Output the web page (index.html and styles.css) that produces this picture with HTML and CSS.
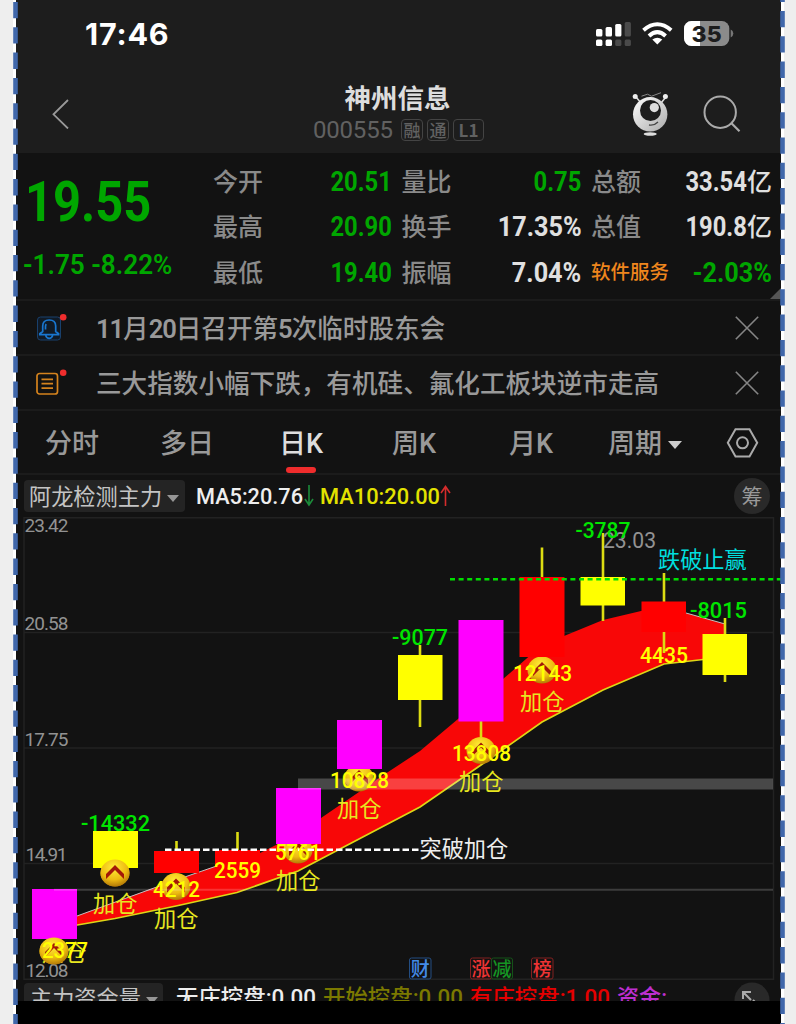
FILE: index.html
```html
<!DOCTYPE html>
<html lang="zh-CN">
<head>
<meta charset="utf-8">
<title>神州信息 000555</title>
<link rel="stylesheet" href="styles.css">
</head>
<body>
<div class="stage">
<svg class="edge" width="5" height="1024"><path class="dash" d="M2.5 2V1024"/></svg>
<main class="phone">
  <header class="top">
    <div class="status">
      <span class="clock">17:46</span>
      <svg class="status-icons" width="138" height="28" viewBox="0 0 138 28">
        <g fill="#fff">
          <rect x="0" y="8" width="6.4" height="7.4" rx="1.5"/><rect x="9.6" y="6" width="6.4" height="9.4" rx="1.5"/><rect x="19.2" y="3" width="6.2" height="12.4" rx="1.5"/>
          <rect x="0" y="18.4" width="6.4" height="6.6" rx="1.5"/><rect x="9.6" y="18.4" width="6.4" height="6.6" rx="1.5"/>
        </g>
        <g fill="#4a4a4a"><rect x="28.7" y="1" width="6.2" height="14.4" rx="1.5"/><rect x="19.2" y="18.4" width="6.2" height="6.6" rx="1.5"/><rect x="28.7" y="18.4" width="6.2" height="6.6" rx="1.5"/></g>
        <g fill="none" stroke="#fff" stroke-width="4"><path d="M47.500 9.200Q61.300-2.600 75.200 9.200"/><path d="M53 15Q61.300 7.400 69.600 15"/></g>
        <path fill="#fff" d="M56.300 18.600q5-3.800 10 0l-5 5z"/>
        <rect x="88" y="0" width="45.3" height="25" rx="7.5" fill="#8b8b8b"/>
        <path fill="#fff" d="M95.5 0H104V25H95.5A7.500 7.500 0 0 1 88 17.500V7.500A7.500 7.500 0 0 1 95.500 0Z"/>
        <path fill="#777" d="M134.700 8.500q2.600 1 2.600 4t-2.600 4z"/>
        <text class="battery" x="110.600" y="20.600" text-anchor="middle" textLength="30" lengthAdjust="spacingAndGlyphs">35</text>
      </svg>
    </div>
    <div class="titlebar">
      <svg class="back" width="18" height="30" viewBox="0 0 18 30"><path d="M16 1 1.5 15.3 16 29.5"/></svg>
      <div class="title">
        <h1>神州信息</h1>
        <div class="code"><span class="digits">000555</span><i>融</i><i>通</i><i class="wide">L1</i></div>
      </div>
      <div class="tools">
        <svg width="38" height="44" viewBox="0 0 38 44">
          <defs><linearGradient id="robot" x2="1" y2="1"><stop stop-color="#fff"/><stop offset="1" stop-color="#aaa"/></linearGradient></defs>
          <path d="M4 5l5 6M34 5l-5 6" stroke="#ddd" stroke-width="1.6"/><circle cx="3.2" cy="4.6" r="2.5" fill="#eee"/><circle cx="33.4" cy="4.6" r="2.5" fill="#eee"/>
          <path d="M9.5 4.2l6-2 4 2 9.5-3.5" fill="none" stroke="#888" stroke-width="1"/>
          <circle cx="18.2" cy="22.3" r="17.2" fill="url(#robot)"/><circle cx="18.5" cy="18.5" r="10.5" fill="#1d1d1d"/><circle cx="22.3" cy="15.6" r="4.6" fill="#ddd"/>
          <path d="M17 33q5 1 9-3" fill="none" stroke="#444" stroke-width="1.3"/><ellipse cx="18.2" cy="42" rx="6.5" ry="1.7" fill="#ddd"/>
        </svg>
        <svg width="38" height="38" viewBox="0 0 38 38"><circle cx="17.2" cy="17.2" r="15.7" fill="none" stroke="#aaa" stroke-width="2"/><path d="M28.2 28 36.5 36.3" stroke="#aaa" stroke-width="2.2"/></svg>
      </div>
    </div>
  </header>

  <section class="quote">
    <div class="price"><b>19.55</b><span>-1.75 -8.22%</span></div>
    <dl class="stats">
      <div><dt>今开</dt><dd class="down"><span>20.51</span></dd></div>
      <div><dt>量比</dt><dd class="down"><span>0.75</span></dd></div>
      <div><dt>总额</dt><dd><span>33.54</span>亿</dd></div>
      <div><dt>最高</dt><dd class="down"><span>20.90</span></dd></div>
      <div><dt>换手</dt><dd class="percent"><span>17.35%</span></dd></div>
      <div><dt>总值</dt><dd><span>190.8</span>亿</dd></div>
      <div><dt>最低</dt><dd class="down"><span>19.40</span></dd></div>
      <div><dt>振幅</dt><dd class="percent"><span>7.04%</span></dd></div>
      <div><dt class="sector">软件服务</dt><dd class="down percent"><span>-2.03%</span></dd></div>
    </dl>
    <i class="corner"></i>
  </section>

  <section class="news">
    <svg width="32" height="32" viewBox="0 0 32 32"><rect x="1.5" y="5" width="23" height="23" rx="3" fill="#101a26" stroke="#19406c"/><path d="M3.800 22.700v-1l2.900-2.200V14q0-6 6.500-6t6.500 6v5.500l2.900 2.200v1zM9.700 23.500q1 2.800 3.500 2.800t3.500-2.800M9.500 17.500v-3q0-1.500.8-2.300" fill="none" stroke="#1976cf" stroke-width="1.700"/><circle cx="27.200" cy="5.300" r="3.300" fill="#f02d2d"/></svg>
    <p><span class="digits">11</span>月<span class="digits">20</span>日召开第<span class="digits">5</span>次临时股东会</p>
    <svg class="close" width="24" height="24" viewBox="0 0 24 24"><path d="M.8.8 23.200 23.200M23.200.8.8 23.200"/></svg>
  </section>
  <section class="news">
    <svg width="32" height="32" viewBox="0 0 32 32"><rect x="1" y="6.500" width="20.500" height="20.500" rx="2.500" fill="none" stroke="#d5831d" stroke-width="1.700"/><path d="M5.500 12.300h11.500M5.500 16.700h11.500M5.500 21.200h11.500" stroke="#d5831d" stroke-width="1.700"/><circle cx="27.200" cy="5.700" r="3.300" fill="#f02d2d"/></svg>
    <p>三大指数小幅下跌，有机硅、氟化工板块逆市走高</p>
    <svg class="close" width="24" height="24" viewBox="0 0 24 24"><path d="M.8.8 23.200 23.200M23.200.8.8 23.200"/></svg>
  </section>

  <nav class="tabs">
    <span>分时</span><span>多日</span><span class="active">日K</span><span>周K</span><span>月K</span>
    <span class="period">周期<i class="caret"></i></span>
    <svg width="33" height="30" viewBox="0 0 33 30"><g fill="none" stroke="#aaa" stroke-width="2"><path d="M9.500 1.200h14l7.700 13.600-7.700 13.700h-14L1.800 14.800z"/><circle cx="16.500" cy="14.800" r="5.500"/></g></svg>
  </nav>

  <section class="indicator">
    <span class="select">阿龙检测主力<i class="caret"></i></span>
    <svg width="270" height="30" viewBox="0 0 270 30">
      <g class="ma"><text x="0" y="22.500" fill="#eee" textLength="107" lengthAdjust="spacingAndGlyphs">MA5:20.76</text>
      <text x="124" y="22.500" fill="#e2e200" textLength="120" lengthAdjust="spacingAndGlyphs">MA10:20.00</text></g>
      <path d="M113 4v20M109 18l4 6 4-6" fill="none" stroke="#1c8b3a" stroke-width="1.600"/><path d="M249.500 25V5.500M245 12l4.500-6.500 4.500 6.500" fill="none" stroke="#d62c2c" stroke-width="1.600"/>
    </svg>
    <span class="round">筹</span>
  </section>

  <svg class="chart" width="765" height="463" viewBox="16 517 765 463">
    <defs>
      <radialGradient id="gold" cx=".45" cy=".3" r=".75"><stop stop-color="#ffed35"/><stop offset=".6" stop-color="#eebb12"/><stop offset="1" stop-color="#a86d05"/></radialGradient>
      <g id="coin"><ellipse rx="14.500" ry="13.500" fill="url(#gold)"/><path d="M-9 6 0-3 9 6V1L0-8-9 1Z" fill="#a31808"/></g>
    </defs>
    <g fill="none" stroke="#222" stroke-width="1.500"><path d="M24 517.800H773.500V979.300H24ZM24 632.500H773M24 748H773M24 863.500H773"/></g>
    <path fill="#f80707" d="M54 924.500 77 916 137 894 176 880 237 859 260 853 298 834 321 818 359 792 382 776 420 751 458 719 503 679 542 645 564 636 603 620 641 611 664 607 686 613 725 624V657L664 664 603 690 542 722 481 765 420 807 359 839 298 871 237 892.500 176 906 115 918.500 54 929Z"/>
    <path fill="none" stroke="#c7bfc0" stroke-width="1" d="M77 916 176 880 237 859M686 613 725 624"/>
    <path fill="none" stroke="#ddd616" stroke-width="1.700" d="M54 929 115 918.500 176 906 237 892.500 298 871 359 839 420 807 481 765 542 722 603 690 664 664 725 657"/>
    <use href="#coin" x="54" y="951"/><use href="#coin" x="115" y="873"/><use href="#coin" x="176" y="886.500"/><use href="#coin" x="298" y="850"/><use href="#coin" x="359" y="778"/><use href="#coin" x="481" y="750.500"/><use href="#coin" x="542" y="670"/>
    <path fill="none" stroke="#dcdc12" stroke-width="2.600" d="M176.500 841v9M237.500 832v20M420 645v82M481 721v17M542 547.500V577M603 533v88M664 573v29M664 632v21M725 618v64"/>
    <g fill="#ff00ff"><path d="M32 889h45v50H32zM276 788h45v56h-45zM337 720h45v49h-45zM458.500 620h45v101.500h-45z"/></g>
    <g fill="#ff0000"><path d="M154 851h45v22h-45zM215 850h45v24h-45zM519.500 577h45v80h-45zM641.500 601.500H686V632h-44.500z"/></g>
    <path fill="#ffff00" d="M93 831h45v37H93zM398 655h44.500v45H398zM580.500 577H625v28.500h-44.500zM702.500 634H747v41h-44.500z"/>
    <use href="#coin" x="115" y="873"/>
    <path fill="#fff" fill-opacity=".23" d="M298 778.500h475v11H298z"/><path stroke="#fff" stroke-opacity=".18" stroke-width="2" d="M54 889.800h719"/>
    <path stroke="#fff" stroke-width="2.400" stroke-dasharray="6.500 3" d="M165 849.800h254"/><path stroke="#00df00" stroke-width="2.500" stroke-dasharray="5 3.600" d="M450 579.200h331"/>
    <g class="axis">
      <text x="24.500" y="532" textLength="44">23.42</text><text x="24.500" y="630" textLength="44">20.58</text><text x="24.500" y="745.500" textLength="44">17.75</text><text x="25.500" y="861" textLength="42">14.91</text><text x="25.500" y="976.500" textLength="43">12.08</text>
      <text class="high" x="603" y="547.500" textLength="53" lengthAdjust="spacingAndGlyphs">23.03</text>
    </g>
    <g class="value green">
      <text x="81" y="830.800" textLength="69" lengthAdjust="spacingAndGlyphs">-14332</text><text x="392" y="644.500" textLength="56" lengthAdjust="spacingAndGlyphs">-9077</text><text x="575.500" y="538" textLength="55" lengthAdjust="spacingAndGlyphs">-3787</text><text x="690" y="617.500" textLength="57" lengthAdjust="spacingAndGlyphs">-8015</text>
    </g>
    <g class="label">
      <text x="42" y="961">加仓</text><text x="93" y="912">加仓</text><text x="154" y="926.500">加仓</text><text x="276" y="888.500">加仓</text><text x="337" y="817">加仓</text><text x="459" y="790">加仓</text><text x="520" y="709.500">加仓</text>
      <text x="419.500" y="856.500" fill="#eee">突破加仓</text><text x="658" y="567.500" fill="#00dede">跌破止赢</text>
    </g>
    <use href="#coin" x="54" y="951"/>
    <g class="value">
      <text x="42" y="957.500" textLength="46" lengthAdjust="spacingAndGlyphs">2377</text><text x="153" y="897" textLength="47" lengthAdjust="spacingAndGlyphs">4212</text><text x="214" y="877.500" textLength="47" lengthAdjust="spacingAndGlyphs">2559</text><text x="275" y="859.500" textLength="46" lengthAdjust="spacingAndGlyphs">5761</text><text x="330" y="788" textLength="59" lengthAdjust="spacingAndGlyphs">10828</text><text x="452" y="761" textLength="59" lengthAdjust="spacingAndGlyphs">13808</text><text x="513" y="680.500" textLength="59" lengthAdjust="spacingAndGlyphs">12143</text><text x="640" y="662.500" textLength="48" lengthAdjust="spacingAndGlyphs">4435</text>
    </g>
    <g class="event">
      <g fill="none"><rect x="409.500" y="958" width="21.500" height="21" rx="2" stroke="#234d82"/><rect x="470.500" y="958" width="21" height="21" rx="2" stroke="#802020"/><rect x="491.500" y="958" width="21" height="21" rx="2" stroke="#155219"/><rect x="531.500" y="958" width="21.500" height="21" rx="2" stroke="#802020"/></g>
      <text x="420.200" y="975.500" fill="#438be8">财</text><text x="481" y="975.500" fill="#ee3434">涨</text><text x="502" y="975.500" fill="#159523">减</text><text x="542.200" y="975.500" fill="#ee3434">榜</text>
    </g>
  </svg>

  <section class="fund">
    <span class="select">主力资金量<i class="caret"></i></span>
    <svg width="500" height="34" viewBox="0 0 500 34">
      <g class="ma"><text x="0" y="22" fill="#eee" textLength="140" lengthAdjust="spacingAndGlyphs">无庄控盘:0.00</text><text x="147" y="22" fill="#7b7900" textLength="140" lengthAdjust="spacingAndGlyphs">开始控盘:0.00</text><text x="294" y="22" fill="#e50000" textLength="140" lengthAdjust="spacingAndGlyphs">有庄控盘:1.00</text><text x="441" y="22" fill="#bd2fd0" textLength="50" lengthAdjust="spacingAndGlyphs">资金:</text></g>
    </svg>
    <svg class="expand" width="36" height="36" viewBox="0 0 36 36"><circle cx="18" cy="18" r="17.500" fill="#292929"/><path d="M9 17V10h8M9 10l8 8M27 19v7h-8M27 26l-8-8" fill="none" stroke="#aaa" stroke-width="2"/></svg>
  </section>
  <footer></footer>
</main>
<svg class="edge right" width="5" height="1024"><path class="dash" d="M2.500-14.300V1024"/></svg>
</div>
</body>
</html>
```
FILE: styles.css
```css
* { box-sizing: border-box; }
body { margin: 0; background: #eee; font-family: Roboto, "Noto Sans CJK SC", sans-serif; }
i { font-style: normal; }
.stage { position: relative; width: 796px; height: 1024px; overflow: hidden; padding: 0 15px 0 16px; background: linear-gradient(90deg, #eee 13px, #fff 13px, #fff 784px, #eee 784px); }
.edge { position: absolute; left: 12.5px; top: 0; z-index: 2; }
.edge.right { left: 780.3px; }
.dash { stroke: #4067aa; stroke-width: 4.6; stroke-dasharray: 16.3 9; }
.phone { width: 765px; height: 1024px; background: #121212; color: #999; display: flex; flex-direction: column; }
.phone > * { flex: none; }

.top { height: 153px; background: #1d1d1d; }
.status { height: 77px; display: flex; justify-content: space-between; padding: 21px 47px 0 69px; }
.clock { font: 700 30.5px/26px Inter, sans-serif; color: #fff; letter-spacing: .8px; }
.battery { font: 800 22px Inter, sans-serif; fill: #1d1d1d; }
.titlebar { display: grid; grid-template-columns: 200px 1fr 196px; padding: 0 40px 0 36px; }
.back { margin-top: 22px; fill: none; stroke: #999; stroke-width: 1.8; }
.title { text-align: center; }
h1 { margin: 0; font: 700 26.5px/40px "Noto Sans CJK SC", sans-serif; color: #ddd; transform: translateX(-1px); }
.code { display: flex; justify-content: center; align-items: center; height: 26px; gap: 4px; font-size: 24px; color: #616161; }
.code .digits { width: 80px; margin-right: 4px; text-align: left; letter-spacing: -.2px; }
.code i { width: 22px; height: 22px; border: 1.5px solid #444; border-radius: 4px; font: 500 17px/19px "Noto Sans CJK SC", sans-serif; }
.code .wide { width: 31px; font-weight: 700; }
.tools { display: flex; justify-content: flex-end; gap: 33px; padding-top: 15px; }
.tools svg:last-child { margin-top: 3px; }

.quote { position: relative; height: 148px; display: flex; border-bottom: 2px solid #1b1b1b; }
.price { width: 197px; padding: 12px 0 0 9px; color: #00a600; white-space: nowrap; font-weight: 700; }
.price b { display: block; font: 700 55.5px/76px Roboto, sans-serif; transform: scaleX(.88); transform-origin: left; }
.price span { display: block; margin: 7px 0 0 -2px; font: 600 27.5px/34px Roboto, sans-serif; transform: scaleX(.95); transform-origin: left; }
.stats { margin: 5px 0 0; width: 559px; height: 137px; display: grid; grid-template-columns: 179px 180px 181px; column-gap: 9.5px; grid-template-rows: repeat(3, 45.5px); }
.stats div { display: flex; justify-content: space-between; align-items: center; white-space: nowrap; }
dt { font: 500 25px/36px "Noto Sans CJK SC", sans-serif; color: #8a8a8a; transform: translateY(-1px); }
dt.sector { font-size: 19.5px; font-weight: 500; color: #ef861d; }
dd { margin: 0; color: #e0e0e0; font: 500 25px/36px "Noto Sans CJK SC", sans-serif; }
dd span { display: inline-block; font: 700 27px/36px Roboto, sans-serif; transform: scaleX(.88); transform-origin: right; }
dd.percent span { transform: scaleX(.935); }
dd.down { color: #00a600; }
.corner { position: absolute; right: 0; bottom: 0; border-left: 11px solid transparent; border-bottom: 11px solid #555; }

.news { height: 55px; display: flex; align-items: center; padding: 0 22px 0 20px; border-bottom: 2px solid #1b1b1b; }
.news p { margin: 2px auto 0 28px; font-size: 25.6px; font-weight: 500; line-height: 36px; white-space: nowrap; }
.news .digits { font-weight: 600; letter-spacing: -1.1px; }
.close { fill: none; stroke: #858585; stroke-width: 1.6; }

.tabs { height: 64px; display: grid; grid-template-columns: 115px 119px 113px 117px 99px 118px auto; align-items: center; padding: 1px 0 0 29px; font-size: 27px; font-weight: 500; line-height: 38px; border-bottom: 2px solid #1b1b1b; }
.tabs span { transform: translateY(1px); }
.tabs .active { position: relative; color: #ddd; }
.tabs .active::after { content: ""; position: absolute; left: 7px; top: 42px; width: 30px; height: 6px; border-radius: 3px; background: #ef2c2c; }
.caret { display: inline-block; border: 7px solid transparent; border-top: 8px solid currentColor; border-bottom: 0; margin-left: 6px; vertical-align: 4px; }
.period .caret { color: #ccc; }

.indicator { height: 42px; display: flex; align-items: center; padding: 0 11px 0 8px; }
.select { width: 161px; height: 32px; padding-left: 5px; border-radius: 4px; background: #242424; color: #c4c4c4; font: 400 22.2px/31px "Noto Sans CJK SC", sans-serif; white-space: nowrap; }
.select .caret { color: #969696; border-width: 7px 6.5px 0; margin-left: 5px; vertical-align: 3px; }
.indicator svg { margin-left: 11px; }
.ma { font: 500 22px Roboto, "Noto Sans CJK SC", sans-serif; }
.round { width: 36px; height: 36px; margin-left: auto; border-radius: 50%; background: #292929; color: #999; font: 400 21px/34px "Noto Sans CJK SC", sans-serif; text-align: center; }

.chart { display: block; }
.axis { font: 400 19px Roboto, sans-serif; fill: #929292; }
.axis .high { font-size: 22px; }
.value { font: 500 22px Roboto, sans-serif; fill: #ffff00; }
.value.green { fill: #00e500; }
.label { font: 400 22.2px "Noto Sans CJK SC", sans-serif; fill: #e7e720; }
.event { font: 500 19px "Noto Sans CJK SC", sans-serif; text-anchor: middle; }

.fund { height: 21px; overflow: hidden; display: flex; align-items: flex-start; padding: 3px 11px 0 8px; }
.fund .select { width: 139px; padding-left: 6px; line-height: 28px; }
.fund svg { flex: none; margin-left: 13px; }
.fund .expand { margin: -1px 0 0 auto; }
footer { flex: 1 0 0 !important; background: #000; }
```
